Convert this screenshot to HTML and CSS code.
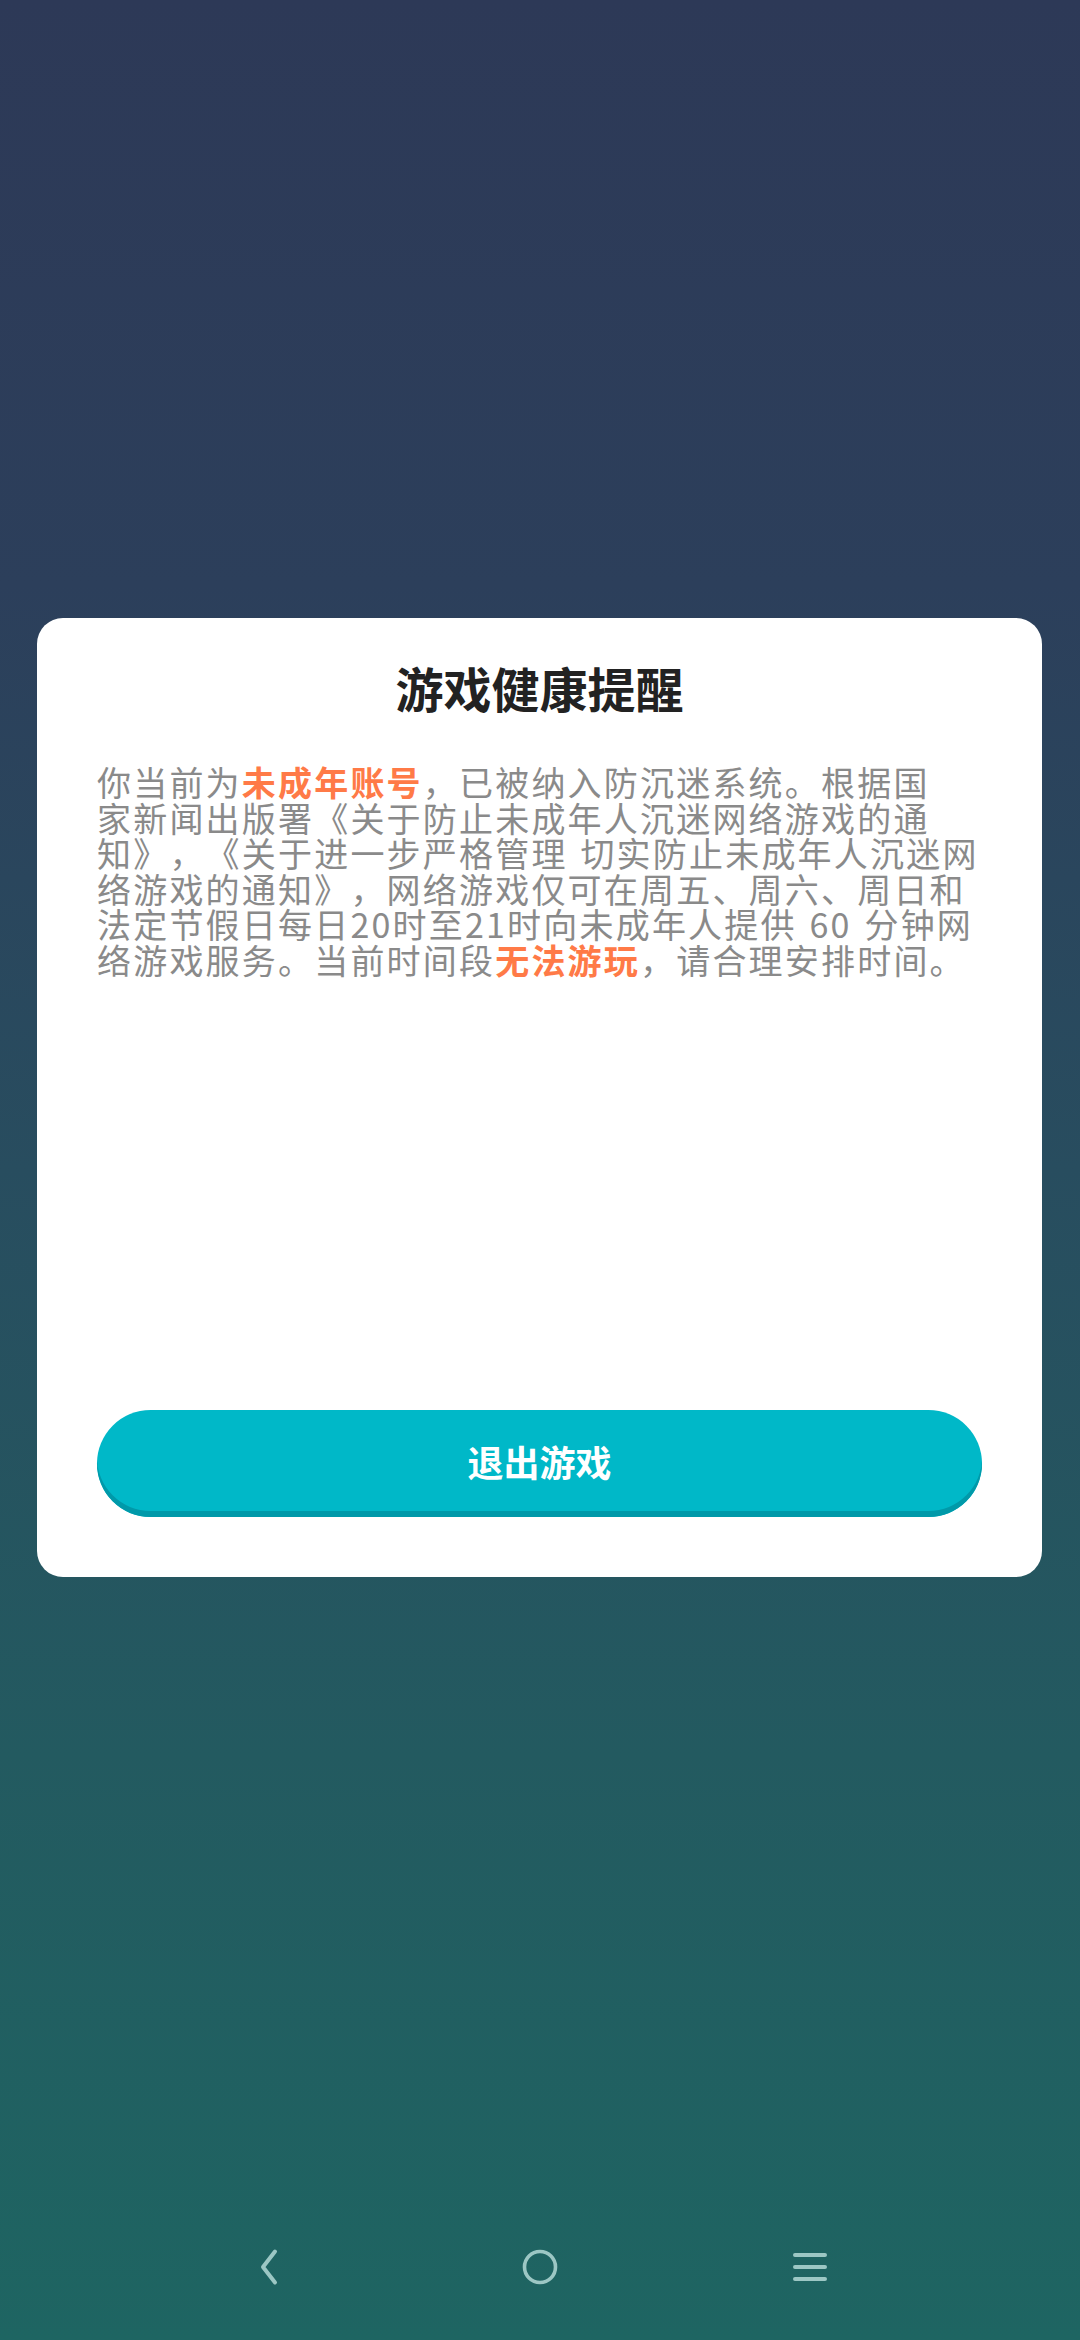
FILE: index.html
```html
<!DOCTYPE html>
<html lang="zh-CN">
<head>
<meta charset="utf-8">
<title>游戏健康提醒</title>
<link rel="stylesheet" href="styles.css">
</head>
<body>
<div class="screen">
  <div class="top-space"></div>
  <div class="card">
    <h1 class="title">游戏健康提醒</h1>
    <p class="message">你当前为<span class="hl">未成年账号</span>，已被纳入防沉迷系统。根据国<br>家新闻出版署《关于防止未成年人沉迷网络游戏的通<br>知》，《关于进一步严格管理 切实防止未成年人沉迷网<br>络游戏的通知》，网络游戏仅可在周五、周六、周日和<br>法定节假日每日20时至21时向未成年人提供 60 分钟网<br>络游戏服务。当前时间段<span class="hl">无法游玩</span>，请合理安排时间。</p>
    <button class="exit-btn">退出游戏</button>
  </div>
  <div class="bottom-space"></div>
  <nav class="navbar">
    <svg class="nav-icon" width="40" height="40" viewBox="0 0 40 40"><path d="M29 4.5 L17 20 L29 35.5" fill="none" stroke="#9cc7c4" stroke-width="4" stroke-linecap="round" stroke-linejoin="round"/></svg>
    <svg class="nav-icon" width="40" height="40" viewBox="0 0 40 40"><ellipse cx="20" cy="20" rx="15.5" ry="15.5" fill="none" stroke="#9cc7c4" stroke-width="3.6"/></svg>
    <svg class="nav-icon" width="40" height="40" viewBox="0 0 40 40"><path d="M5 8 H35 M5 20 H35 M5 32 H35" fill="none" stroke="#9cc7c4" stroke-width="4" stroke-linecap="round"/></svg>
  </nav>
</div>
</body>
</html>
```

FILE: styles.css
```css
* { box-sizing: border-box; }
html, body {
  margin: 0;
  padding: 0;
}
body {
  width: 1080px;
  height: 2340px;
  overflow: hidden;
  font-family: "Noto Sans CJK SC", "Noto Sans", sans-serif;
}
.screen {
  width: 1080px;
  height: 2340px;
  display: flex;
  flex-direction: column;
  background: linear-gradient(180deg, #2d3957 0%, #2c3f5b 25%, #284d5f 50%, #235a60 75%, #1e6562 100%);
}
.top-space {
  height: 618px;
  flex: none;
}
.card {
  flex: none;
  margin: 0 38px 0 37px;
  height: 959px;
  background: #ffffff;
  border-radius: 26px;
  padding: 44px 60px 60px;
  display: flex;
  flex-direction: column;
}
.title {
  margin: 0;
  font-size: 48px;
  line-height: 50px;
  font-weight: 700;
  color: #222222;
  text-align: center;
}
.message {
  margin: 52px 0 0;
  font-size: 34px;
  line-height: 35.5px;
  color: #8a8a8a;
  white-space: nowrap;
  letter-spacing: 2.2px;
  word-spacing: 3px;
  text-spacing-trim: space-all;
  font-kerning: none;
}
.hl {
  color: #ff7a47;
  font-weight: 700;
}
.exit-btn {
  margin-top: auto;
  width: 100%;
  height: 107px;
  border: none;
  border-radius: 54px;
  background: #00b8c8;
  box-shadow: inset 0 -6px 0 #0099a9;
  color: #ffffff;
  font-family: "Noto Sans CJK SC", "Noto Sans", sans-serif;
  font-size: 36px;
  font-weight: 700;
  padding: 0 0 6px;
}
.bottom-space {
  flex: 1;
}
.navbar {
  flex: none;
  height: 146px;
  display: flex;
  align-items: center;
}
.nav-icon {
  display: block;
}
.nav-icon:nth-child(1) { margin-left: 246px; }
.nav-icon:nth-child(2) { margin-left: 234px; }
.nav-icon:nth-child(3) { margin-left: 230px; }
```
